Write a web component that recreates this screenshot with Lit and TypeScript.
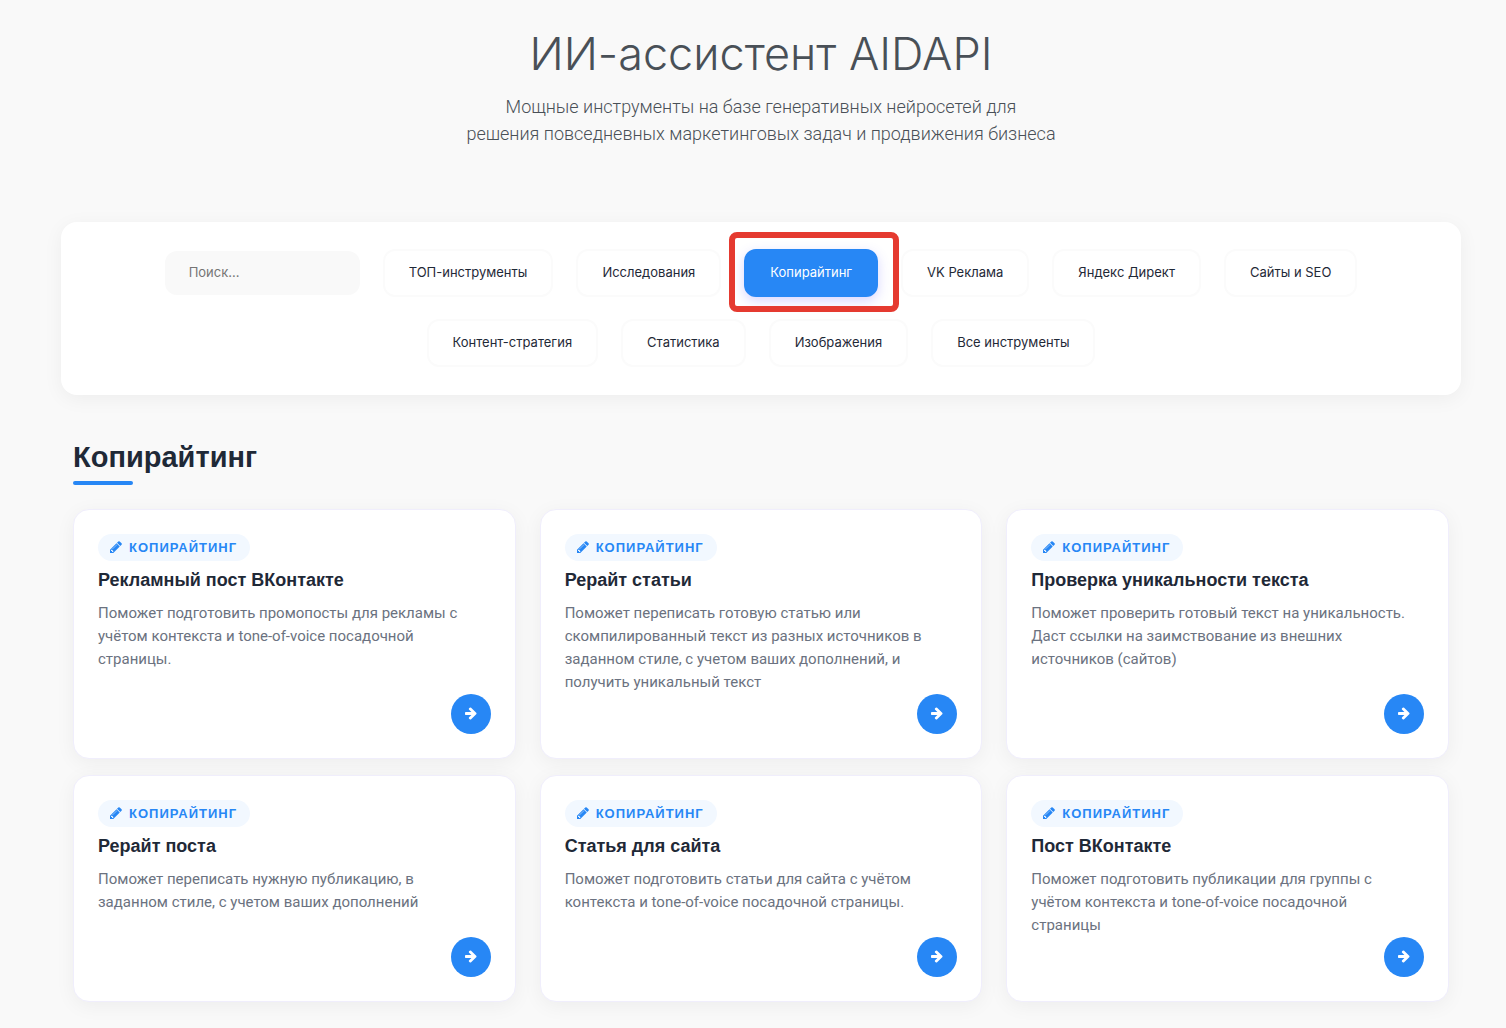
import { LitElement, html, css, svg } from "lit";
import { customElement, property, state } from "lit/decorators.js";
import { classMap } from "lit/directives/class-map.js";

interface Tool {
  title: string;
  text: string;
}

const CATEGORIES = [
  "ТОП-инструменты",
  "Исследования",
  "Копирайтинг",
  "VK Реклама",
  "Яндекс Директ",
  "Сайты и SEO",
  "Контент-стратегия",
  "Статистика",
  "Изображения",
  "Все инструменты",
];

const TOOLS: Tool[] = [
  {
    title: "Рекламный пост ВКонтакте",
    text: "Поможет подготовить промопосты для рекламы с учётом контекста и tone-of-voice посадочной страницы.",
  },
  {
    title: "Рерайт статьи",
    text: "Поможет переписать готовую статью или скомпилированный текст из разных источников в заданном стиле, с учетом ваших дополнений, и получить уникальный текст",
  },
  {
    title: "Проверка уникальности текста",
    text: "Поможет проверить готовый текст на уникальность. Даст ссылки на заимствование из внешних источников (сайтов)",
  },
  {
    title: "Рерайт поста",
    text: "Поможет переписать нужную публикацию, в заданном стиле, с учетом ваших дополнений",
  },
  {
    title: "Статья для сайта",
    text: "Поможет подготовить статьи для сайта с учётом контекста и tone-of-voice посадочной страницы.",
  },
  {
    title: "Пост ВКонтакте",
    text: "Поможет подготовить публикации для группы с учётом контекста и tone-of-voice посадочной страницы",
  },
];

const pencil = svg`<path d="M363 1536l91-91-235-235-91 91v107h128v128h107zm523-928q0-22-22-22-10 0-17 7l-542 542q-7 7-7 17 0 22 22 22 10 0 17-7l542-542q7-7 7-17zm-54-192l416 416-832 832h-416v-416zm683 96q0 53-37 90l-166 166-416-416 166-165q36-38 90-38 53 0 91 38l235 234q37 39 37 91z"/>`;

const arrow = svg`<path d="M1472 960q0 54-37 91l-651 651q-39 37-91 37-51 0-90-37l-75-75q-38-38-38-91t38-91l293-293h-704q-52 0-84.5-37.5t-32.5-90.5v-128q0-53 32.5-90.5t84.5-37.5h704l-293-294q-38-36-38-90t38-90l75-75q38-38 90-38 53 0 91 38l651 651q37 35 37 90z"/>`;

@customElement("tool-card")
export class ToolCard extends LitElement {
  @property() heading = "";
  @property() text = "";
  @property() category = "";

  static styles = css`
    :host {
      display: flex;
      flex-direction: column;
      align-items: flex-start;
      padding: 24px;
      border: 1px solid #f0eefc;
      border-radius: 16px;
      background: #fff;
      box-shadow: 0 4px 20px rgba(0, 0, 0, 0.05);
    }
    .badge {
      display: flex;
      align-items: center;
      gap: 7px;
      padding: 0 13px 0 12px;
      border-radius: 14px;
      background: #f2f8ff;
      color: #2787f5;
      font-size: 13px;
      font-weight: 700;
      line-height: 27px;
      letter-spacing: 1px;
      text-transform: uppercase;
    }
    .pencil {
      width: 12px;
      height: 14px;
      fill: currentColor;
    }
    .title {
      margin: 7px 0 10px;
      color: #1f2937;
      font-size: 18px;
      font-weight: 700;
      line-height: 24px;
    }
    .text {
      margin: 0;
      padding-right: 12px;
      color: #6b7280;
      font-family: Roboto, sans-serif;
      font-size: 15px;
      line-height: 23px;
    }
    .open {
      display: flex;
      align-items: center;
      justify-content: center;
      width: 40px;
      height: 40px;
      margin: auto 0 0 auto;
      padding: 0;
      border: 0;
      border-radius: 50%;
      background: #2787f5;
      color: #fff;
      cursor: pointer;
    }
    .arrow {
      width: 12px;
      height: 14px;
      fill: currentColor;
    }
  `;

  render() {
    return html`
      <span class="badge">
        <svg class="pencil" viewBox="0 128 1536 1792" aria-hidden="true">${pencil}</svg>
        ${this.category}
      </span>
      <h3 class="title">${this.heading}</h3>
      <p class="text">${this.text}</p>
      <button class="open" type="button" aria-label=${this.heading}>
        <svg class="arrow" viewBox="0 128 1536 1792" aria-hidden="true">${arrow}</svg>
      </button>
    `;
  }
}

@customElement("app-root")
export class AppRoot extends LitElement {
  @state() private active = "Копирайтинг";

  static styles = css`
    :host {
      display: block;
      box-sizing: border-box;
      min-height: 100vh;
      padding: 27px 45px 27px 61px;
      background: #f9f9f9;
      color: #1f2937;
      font-family: "Liberation Sans", Arial, sans-serif;
    }
    .hero {
      color: #495057;
      font-family: Inter, sans-serif;
      font-weight: 300;
      text-align: center;
    }
    .name {
      margin: 0 0 12px;
      font-size: 45px;
      font-weight: 300;
      line-height: 54px;
    }
    .lead {
      margin: 0;
      font-family: Roboto, sans-serif;
      font-size: 18px;
      line-height: 27px;
    }
    .filters {
      display: flex;
      flex-wrap: wrap;
      align-items: center;
      justify-content: center;
      gap: 22px 23px;
      margin-top: 75px;
      padding: 27px 80px 28px;
      border-radius: 16px;
      background: #fff;
      box-shadow: 0 4px 20px rgba(0, 0, 0, 0.05);
    }
    .search {
      box-sizing: border-box;
      width: 195px;
      height: 44px;
      padding: 0 24px 2px;
      border: 0;
      border-radius: 12px;
      background: #f9f9f9;
      color: #1f2937;
      font: 13px Inter, sans-serif;
    }
    .search::placeholder {
      color: #757575;
    }
    .filter {
      position: relative;
      height: 48px;
      padding: 0 24px 2px;
      border: 2px solid #fbfbfb;
      border-radius: 12px;
      background: #fff;
      color: #1f2937;
      font: 13px Inter, sans-serif;
      cursor: pointer;
    }
    .filter.active {
      z-index: 1;
      border-color: #2787f5;
      background: #2787f5;
      color: #fff;
      box-shadow: 0 4px 12px rgba(99, 91, 255, 0.25);
    }
    .mark {
      position: absolute;
      inset: -19px -23px -17px -17px;
      border: 6px solid #e53a30;
      border-radius: 8px;
      pointer-events: none;
    }
    .section {
      padding: 42px 12px 0;
    }
    .heading {
      margin: 0;
      font-size: 29px;
      font-weight: 700;
      line-height: 40px;
    }
    .heading::after {
      content: "";
      display: block;
      width: 60px;
      height: 4px;
      margin-top: 4px;
      border-radius: 2px;
      background: #2787f5;
    }
    .cards {
      display: grid;
      grid-template-columns: repeat(3, minmax(0, 1fr));
      gap: 16px 24px;
      margin-top: 24px;
    }
  `;

  render() {
    return html`
      <header class="hero">
        <h1 class="name">ИИ-ассистент AIDAPI</h1>
        <p class="lead">
          Мощные инструменты на базе генеративных нейросетей для<br />
          решения повседневных маркетинговых задач и продвижения бизнеса
        </p>
      </header>
      <nav class="filters">
        <input class="search" type="search" placeholder="Поиск..." aria-label="Поиск" />
        ${CATEGORIES.map(
          (name) => html`<button
            type="button"
            class=${classMap({ filter: true, active: name === this.active })}
            aria-pressed=${name === this.active ? "true" : "false"}
            @click=${() => (this.active = name)}
          >${name}${name === this.active ? html`<span class="mark"></span>` : ""}</button>`
        )}
      </nav>
      <section class="section">
        <h2 class="heading">${this.active}</h2>
        <div class="cards">
          ${TOOLS.map(
            (tool) => html`<tool-card
              .heading=${tool.title}
              .text=${tool.text}
              .category=${this.active}
            ></tool-card>`
          )}
        </div>
      </section>
    `;
  }
}
